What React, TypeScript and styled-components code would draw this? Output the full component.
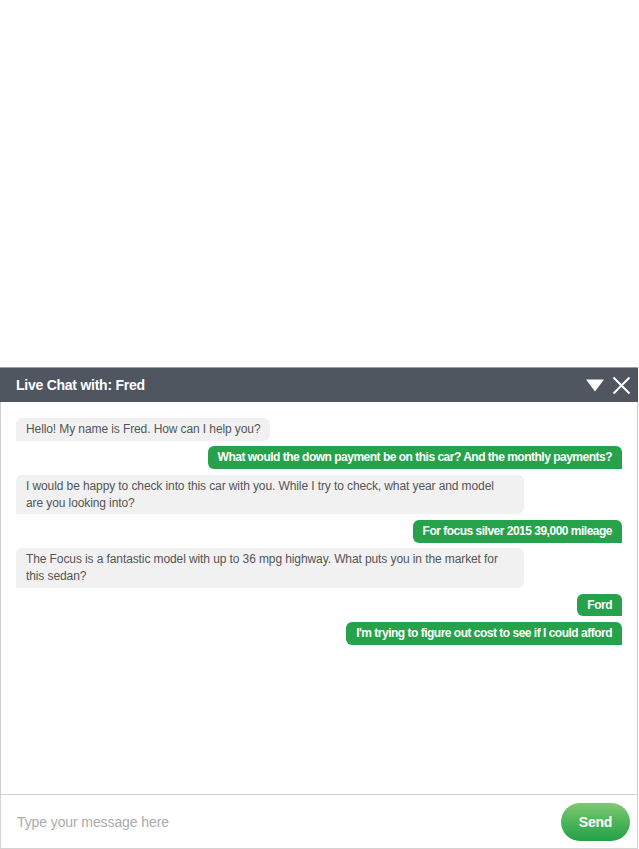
import React from "react";
import styled, { createGlobalStyle } from "styled-components";

const Global = createGlobalStyle`
  html, body { margin: 0; padding: 0; background: #fff; }
  body { font-family: "Liberation Sans", Arial, Helvetica, sans-serif; }
`;

const Page = styled.div`
  height: 849px;
  display: flex;
  flex-direction: column;
  justify-content: flex-end;
`;

const Widget = styled.div`
  width: 638px;
  height: 482px;
  display: flex;
  flex-direction: column;
  box-sizing: border-box;
`;

const Header = styled.div`
  height: 35px;
  flex: none;
  background: #4f5660;
  border-top: 1px solid #9aa0a6;
  box-sizing: border-box;
  display: flex;
  align-items: center;
  justify-content: space-between;
  padding: 0 7px 0 16px;
`;

const Title = styled.div`
  color: #fff;
  font-weight: bold;
  font-size: 14px;
  letter-spacing: -0.25px;
`;

const Controls = styled.div`
  display: flex;
  align-items: center;
  gap: 8px;
`;

const IconBtn = styled.span`
  display: inline-flex;
  align-items: center;
  justify-content: center;
`;

const Body = styled.div`
  flex: 1;
  border-left: 1px solid #cfcfcf;
  border-right: 1px solid #cfcfcf;
  padding: 16px 15px 0 15px;
  display: flex;
  flex-direction: column;
  gap: 5.6px;
  align-items: flex-start;
`;

const Bubble = styled.div<{ $me?: boolean }>`
  font-size: 12px;
  line-height: 16.8px;
  padding: 3px 10px;
  max-width: 488px;
  box-sizing: content-box;
  align-self: ${(p) => (p.$me ? "flex-end" : "flex-start")};
  background: ${(p) => (p.$me ? "#26a24b" : "#f1f1f1")};
  color: ${(p) => (p.$me ? "#fff" : "#555")};
  font-weight: ${(p) => (p.$me ? "bold" : "normal")};
  letter-spacing: ${(p) => (p.$me ? "-0.5px" : "-0.1px")};
  border-radius: ${(p) => (p.$me ? "6px 6px 0 6px" : "6px 6px 6px 0")};
`;

const Footer = styled.div`
  height: 55px;
  flex: none;
  box-sizing: border-box;
  border: 1px solid #d3d3d3;
  border-top: 1px solid #d0d0d0;
  display: flex;
  align-items: center;
  padding: 0 7px 0 16px;
`;

const Input = styled.input`
  flex: 1;
  border: none;
  outline: none;
  font-family: "Liberation Sans", Arial, sans-serif;
  font-size: 14px;
  letter-spacing: -0.1px;
  color: #555;
  padding: 0;
  background: transparent;
  &::placeholder { color: #ababab; }
`;

const SendButton = styled.button`
  width: 69px;
  height: 38px;
  border: none;
  border-radius: 19px;
  background: linear-gradient(to bottom, #80c971 0%, #4db55a 50%, #22a047 100%);
  color: #fff;
  font-family: "Liberation Sans", Arial, sans-serif;
  font-weight: bold;
  font-size: 14px;
  letter-spacing: -0.2px;
  cursor: pointer;
`;

const messages: { me?: boolean; text: string }[] = [
  { text: "Hello! My name is Fred. How can I help you?" },
  { me: true, text: "What would the down payment be on this car? And the monthly payments?" },
  { text: "I would be happy to check into this car with you. While I try to check, what year and model are you looking into?" },
  { me: true, text: "For focus silver 2015 39,000 mileage" },
  { text: "The Focus is a fantastic model with up to 36 mpg highway. What puts you in the market for this sedan?" },
  { me: true, text: "Ford" },
  { me: true, text: "I'm trying to figure out cost to see if I could afford" },
];

export default function App() {
  return (
    <Page>
      <Global />
      <Widget>
        <Header>
          <Title>Live Chat with: Fred</Title>
          <Controls>
            <IconBtn>
              <svg width="18" height="13" viewBox="0 0 18 13">
                <polygon points="0,0.5 18,0.5 9,12.5" fill="#fff" />
              </svg>
            </IconBtn>
            <IconBtn>
              <svg width="19" height="19" viewBox="0 0 19 19">
                <path d="M1.5 1.5 L17.5 17.5 M17.5 1.5 L1.5 17.5" stroke="#fff" strokeWidth="2" />
              </svg>
            </IconBtn>
          </Controls>
        </Header>
        <Body>
          {messages.map((m, i) => (
            <Bubble key={i} $me={m.me}>
              {m.text}
            </Bubble>
          ))}
        </Body>
        <Footer>
          <Input placeholder="Type your message here" />
          <SendButton>Send</SendButton>
        </Footer>
      </Widget>
    </Page>
  );
}
